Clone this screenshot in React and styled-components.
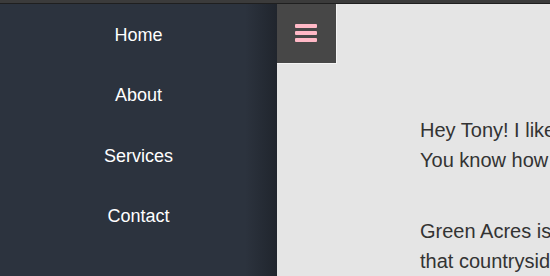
import styled, { createGlobalStyle } from 'styled-components';

const GlobalStyle = createGlobalStyle`
  html, body {
    margin: 0;
    padding: 0;
    height: 100%;
    overflow: hidden;
  }
  body {
    font-family: "Liberation Sans", Arial, sans-serif;
    background: #e5e5e5;
  }
`;

const links = ['Home', 'About', 'Services', 'Contact'];

export default function App() {
  return (
    <>
      <GlobalStyle />
      <Page>
        <TopStrip />
        <Body>
          <Sidebar>
            {links.map((l) => (
              <NavLink key={l} href="#">{l}</NavLink>
            ))}
          </Sidebar>
          <Main>
            <MenuBtn>
              <svg width="22" height="20" viewBox="0 0 22 20">
                <rect x="0" y="1" width="22" height="4" rx="1" fill="#ffb8c6" />
                <rect x="0" y="8" width="22" height="4" rx="1" fill="#ffb8c6" />
                <rect x="0" y="15" width="22" height="4" rx="1" fill="#ffb8c6" />
              </svg>
            </MenuBtn>
            <Content>
              <Para>
                Hey Tony! I like the way you handle your little country place here.<br />
                You know how it is with folks who just can't leave the city behind.
              </Para>
              <Para>
                Green Acres is the place for me, farm living is the life for me.<br />
                that countryside living with the land spreading out so far and wide.
              </Para>
            </Content>
          </Main>
        </Body>
      </Page>
    </>
  );
}

const Page = styled.div`
  width: 550px;
  height: 276px;
  overflow: hidden;
  display: flex;
  flex-direction: column;
`;

const TopStrip = styled.div`
  height: 3px;
  flex-shrink: 0;
  background: #3b3b3b;
  border-bottom: 1px solid #1f1f1f;
`;

const Body = styled.div`
  flex: 1;
  display: flex;
  min-height: 0;
`;

const Sidebar = styled.nav`
  width: 277px;
  flex-shrink: 0;
  background: linear-gradient(to right, #2c333e 0, #2c333e 245px, #20252d 277px);
  display: flex;
  flex-direction: column;
  align-items: center;
  padding-top: 19px;
`;

const NavLink = styled.a`
  display: block;
  height: 60.3px;
  line-height: 24px;
  color: #ffffff;
  text-decoration: none;
  font-size: 18px;
`;

const Main = styled.main`
  flex: 1;
  background: #e5e5e5;
  overflow: hidden;
  display: flex;
  flex-direction: column;
  min-width: 0;
`;

const MenuBtn = styled.div`
  width: 60px;
  height: 60px;
  flex-shrink: 0;
  background: #474747;
  border-right: 1px solid #f4f4f4;
  border-bottom: 1px solid #f4f4f4;
  display: flex;
  align-items: center;
  justify-content: center;
  box-sizing: border-box;
  padding-right: 2px;
  padding-bottom: 2px;
`;

const Content = styled.div`
  padding: 51px 0 0 143px;
  white-space: nowrap;
`;

const Para = styled.p`
  margin: 0 0 41px;
  font-size: 20px;
  line-height: 30px;
  color: #333333;
`;
